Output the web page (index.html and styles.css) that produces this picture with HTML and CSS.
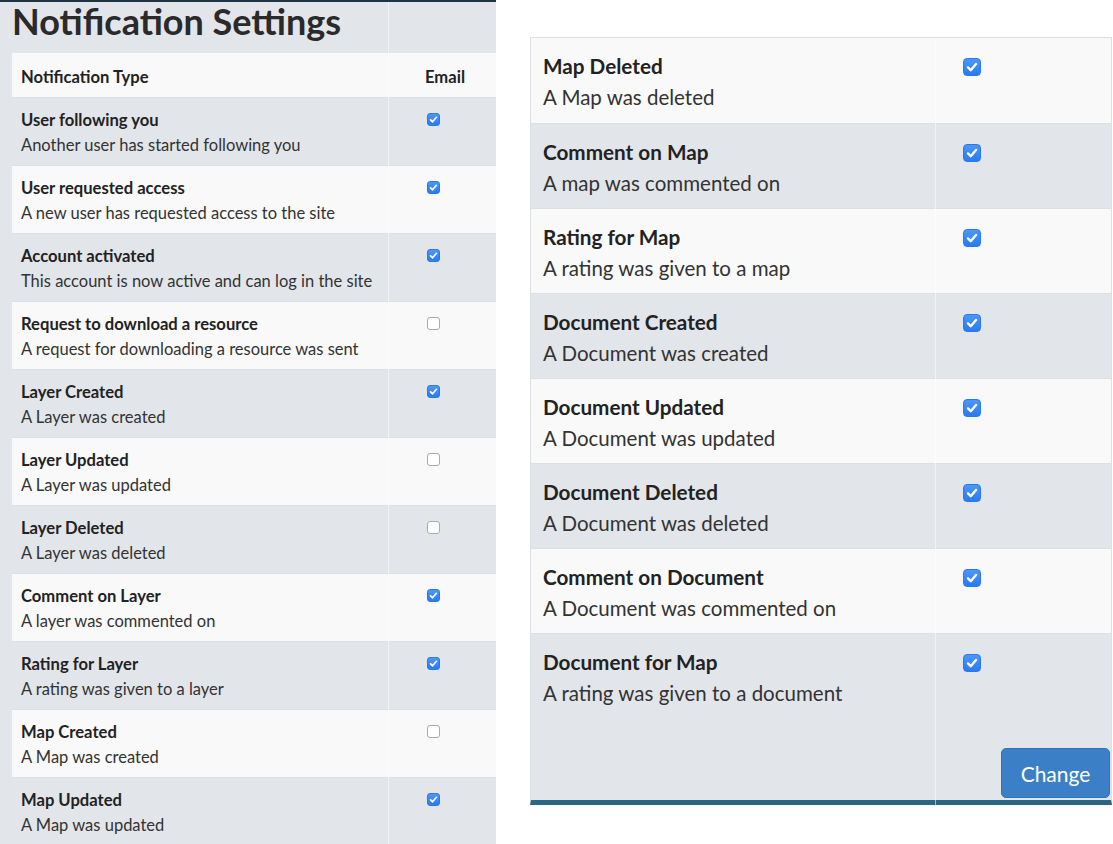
FILE: index.html
```html
<!DOCTYPE html>
<html lang="en">
<head>
<meta charset="utf-8">
<title>Notification Settings</title>
<link rel="stylesheet" href="styles.css">
</head>
<body>
<div class="page">
  <section class="panel-left">
    <span class="vline vline-left"></span>
    <h1 class="page-title">Notification Settings</h1>
    <div class="ntable">
      <div class="nhead">
        <div class="h1c">Notification Type</div>
        <div class="h2c">Email</div>
      </div>
      <div class="nrow odd">
        <div class="c1"><div class="t">User following you</div><div class="d">Another user has started following you</div></div>
        <div class="c2"><span class="cb on"><svg viewBox="0 0 13 13"><path d="M3.6 6.8 5.6 8.8 9.4 4.3" /></svg></span></div>
      </div>
      <div class="nrow even">
        <div class="c1"><div class="t">User requested access</div><div class="d">A new user has requested access to the site</div></div>
        <div class="c2"><span class="cb on"><svg viewBox="0 0 13 13"><path d="M3.6 6.8 5.6 8.8 9.4 4.3" /></svg></span></div>
      </div>
      <div class="nrow odd">
        <div class="c1"><div class="t">Account activated</div><div class="d">This account is now active and can log in the site</div></div>
        <div class="c2"><span class="cb on"><svg viewBox="0 0 13 13"><path d="M3.6 6.8 5.6 8.8 9.4 4.3" /></svg></span></div>
      </div>
      <div class="nrow even">
        <div class="c1"><div class="t">Request to download a resource</div><div class="d">A request for downloading a resource was sent</div></div>
        <div class="c2"><span class="cb"></span></div>
      </div>
      <div class="nrow odd">
        <div class="c1"><div class="t">Layer Created</div><div class="d">A Layer was created</div></div>
        <div class="c2"><span class="cb on"><svg viewBox="0 0 13 13"><path d="M3.6 6.8 5.6 8.8 9.4 4.3" /></svg></span></div>
      </div>
      <div class="nrow even">
        <div class="c1"><div class="t">Layer Updated</div><div class="d">A Layer was updated</div></div>
        <div class="c2"><span class="cb"></span></div>
      </div>
      <div class="nrow odd">
        <div class="c1"><div class="t">Layer Deleted</div><div class="d">A Layer was deleted</div></div>
        <div class="c2"><span class="cb"></span></div>
      </div>
      <div class="nrow even">
        <div class="c1"><div class="t">Comment on Layer</div><div class="d">A layer was commented on</div></div>
        <div class="c2"><span class="cb on"><svg viewBox="0 0 13 13"><path d="M3.6 6.8 5.6 8.8 9.4 4.3" /></svg></span></div>
      </div>
      <div class="nrow odd">
        <div class="c1"><div class="t">Rating for Layer</div><div class="d">A rating was given to a layer</div></div>
        <div class="c2"><span class="cb on"><svg viewBox="0 0 13 13"><path d="M3.6 6.8 5.6 8.8 9.4 4.3" /></svg></span></div>
      </div>
      <div class="nrow even">
        <div class="c1"><div class="t">Map Created</div><div class="d">A Map was created</div></div>
        <div class="c2"><span class="cb"></span></div>
      </div>
      <div class="nrow odd">
        <div class="c1"><div class="t">Map Updated</div><div class="d">A Map was updated</div></div>
        <div class="c2"><span class="cb on"><svg viewBox="0 0 13 13"><path d="M3.6 6.8 5.6 8.8 9.4 4.3" /></svg></span></div>
      </div>
    </div>
  </section>

  <section class="panel-right">
    <span class="vline vline-right"></span>
    <div class="rtable">
      <div class="rrow even">
        <div class="c1"><div class="t">Map Deleted</div><div class="d">A Map was deleted</div></div>
        <div class="c2"><span class="cb big on"><svg viewBox="0 0 13 13"><path d="M3.6 6.8 5.6 8.8 9.4 4.3" /></svg></span></div>
      </div>
      <div class="rrow odd">
        <div class="c1"><div class="t">Comment on Map</div><div class="d">A map was commented on</div></div>
        <div class="c2"><span class="cb big on"><svg viewBox="0 0 13 13"><path d="M3.6 6.8 5.6 8.8 9.4 4.3" /></svg></span></div>
      </div>
      <div class="rrow even">
        <div class="c1"><div class="t">Rating for Map</div><div class="d">A rating was given to a map</div></div>
        <div class="c2"><span class="cb big on"><svg viewBox="0 0 13 13"><path d="M3.6 6.8 5.6 8.8 9.4 4.3" /></svg></span></div>
      </div>
      <div class="rrow odd">
        <div class="c1"><div class="t">Document Created</div><div class="d">A Document was created</div></div>
        <div class="c2"><span class="cb big on"><svg viewBox="0 0 13 13"><path d="M3.6 6.8 5.6 8.8 9.4 4.3" /></svg></span></div>
      </div>
      <div class="rrow even">
        <div class="c1"><div class="t">Document Updated</div><div class="d">A Document was updated</div></div>
        <div class="c2"><span class="cb big on"><svg viewBox="0 0 13 13"><path d="M3.6 6.8 5.6 8.8 9.4 4.3" /></svg></span></div>
      </div>
      <div class="rrow odd">
        <div class="c1"><div class="t">Document Deleted</div><div class="d">A Document was deleted</div></div>
        <div class="c2"><span class="cb big on"><svg viewBox="0 0 13 13"><path d="M3.6 6.8 5.6 8.8 9.4 4.3" /></svg></span></div>
      </div>
      <div class="rrow even">
        <div class="c1"><div class="t">Comment on Document</div><div class="d">A Document was commented on</div></div>
        <div class="c2"><span class="cb big on"><svg viewBox="0 0 13 13"><path d="M3.6 6.8 5.6 8.8 9.4 4.3" /></svg></span></div>
      </div>
      <div class="rrow odd">
        <div class="c1"><div class="t">Document for Map</div><div class="d">A rating was given to a document</div></div>
        <div class="c2"><span class="cb big on"><svg viewBox="0 0 13 13"><path d="M3.6 6.8 5.6 8.8 9.4 4.3" /></svg></span></div>
      </div>
    </div>
    <div class="rfooter">
      <button class="btn-change" type="button">Change</button>
    </div>
  </section>
</div>
</body>
</html>
```

FILE: styles.css
```css
* { box-sizing: border-box; }

html, body {
  margin: 0;
  padding: 0;
  background: #ffffff;
}

body {
  font-family: Lato, "Noto Sans", "Liberation Sans", sans-serif;
  color: #333333;
  width: 1113px;
  height: 844px;
  overflow: hidden;
}

.page {
  display: flex;
  align-items: flex-start;
}

/* ---------- left panel ---------- */
.panel-left {
  position: relative;
  width: 496px;
  height: 844px;
  flex: none;
  background: #e2e5ea;
  border-top: 2px solid #1d3444;
  overflow: hidden;
}

.vline {
  position: absolute;
  top: 0;
  width: 1px;
  background: rgba(255, 255, 255, 0.55);
  z-index: 2;
  pointer-events: none;
}

.vline-left {
  left: 388px;
  bottom: 0;
}

.page-title {
  margin: 0 0 13px 12px;
  font-size: 36px;
  line-height: 38px;
  font-weight: 700;
  color: #2a2a2a;
}

.ntable {
  margin-left: 12px;
}

.nhead {
  display: grid;
  grid-template-columns: 404px 1fr;
  height: 44px;
  padding-top: 4px;
  background: #f9f9f9;
  font-weight: 700;
  font-size: 16.6px;
  line-height: 40px;
  color: #222222;
}

.h1c { padding-left: 9px; }
.h2c { padding-left: 9px; }

.nrow {
  display: grid;
  grid-template-columns: 404px 1fr;
  height: 68px;
  border-top: 1px solid #dcdfe3;
}

.odd { background: #e2e5ea; }
.even { background: #f9f9f9; }

.nrow .c1 {
  padding: 12px 0 0 9px;
}

.nrow .t {
  font-size: 16.6px;
  line-height: 20px;
  font-weight: 700;
  color: #222222;
}

.nrow .d {
  margin-top: 4px;
  font-size: 16.5px;
  line-height: 22px;
  color: #333333;
}

.nrow .c2 {
  padding: 15px 0 0 11px;
}

/* ---------- checkbox ---------- */
.cb {
  display: block;
  width: 13px;
  height: 13px;
  border-radius: 3px;
  background: #ffffff;
  border: 1px solid #ababab;
}

.cb.on {
  border: 1px solid #2a78ee;
  background: linear-gradient(#4b97fb, #2a7af1);
}

.cb svg {
  display: block;
  margin: -1px;
  width: 13px;
  height: 13px;
}

.cb svg path {
  fill: none;
  stroke: #ffffff;
  stroke-width: 1.7;
  stroke-linecap: round;
  stroke-linejoin: round;
}

.cb.big {
  width: 18px;
  height: 18px;
  border-radius: 4px;
}

.cb.big svg {
  width: 18px;
  height: 18px;
}

/* ---------- right panel ---------- */
.panel-right {
  position: relative;
  flex: none;
  width: 582px;
  margin: 37px 0 0 34px;
  border: 1px solid #dcdfe3;
  border-bottom: 5px solid #2a6784;
  background: #e2e5ea;
}

.vline-right {
  left: 404px;
  bottom: -5px;
}

.rrow {
  display: grid;
  grid-template-columns: 404px 1fr;
  height: 85px;
  border-top: 1px solid #dcdfe3;
}

.rrow:first-child { border-top: 0; }

.rrow .c1 {
  padding: 16px 0 0 12px;
}

.rrow .t {
  font-size: 20.7px;
  line-height: 25px;
  font-weight: 700;
  color: #222222;
}

.rrow .d {
  margin-top: 5px;
  font-size: 20.5px;
  line-height: 27px;
  color: #333333;
}

.rrow .c2 {
  padding: 20px 0 0 28px;
}

.rfooter {
  height: 82px;
  display: flex;
  justify-content: flex-end;
  align-items: flex-end;
  padding: 0 1px 2px 0;
}

.btn-change {
  width: 109px;
  height: 50px;
  border: 1px solid #3272b6;
  border-radius: 5px;
  background: #3b80c7;
  color: #ffffff;
  font-family: Lato, "Noto Sans", "Liberation Sans", sans-serif;
  font-size: 21px;
  padding: 0;
  cursor: pointer;
}
```
